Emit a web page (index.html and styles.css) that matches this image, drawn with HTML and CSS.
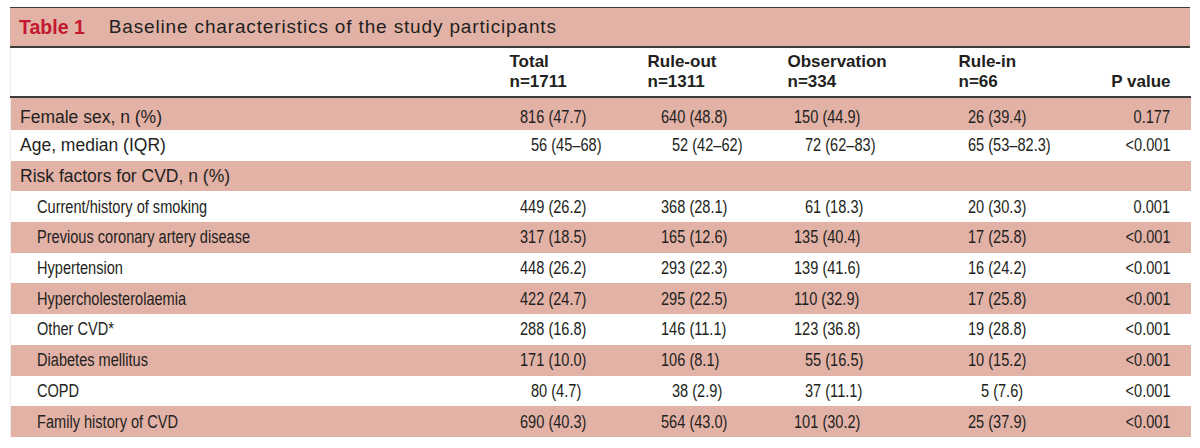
FILE: index.html
```html
<!DOCTYPE html>
<html lang="en">
<head>
<meta charset="utf-8">
<title>Table 1</title>
<link rel="stylesheet" href="styles.css">
</head>
<body>
<div class="tbl">
  <div class="caption"><span class="num">Table 1</span><span class="ttl">Baseline characteristics of the study participants</span></div>
  <table>
    <colgroup>
      <col class="c-label"><col class="c-total"><col class="c-out"><col class="c-obs"><col class="c-in"><col class="c-p">
    </colgroup>
    <thead>
      <tr>
        <th></th>
        <th>Total<br>n=1711</th>
        <th>Rule-out<br>n=1311</th>
        <th>Observation<br>n=334</th>
        <th>Rule-in<br>n=66</th>
        <th class="pv"><br>P value</th>
      </tr>
    </thead>
    <tbody>
      <tr class="pink first">
        <td class="lab">Female sex, n (%)</td>
        <td><span class="v">816 (47.7)</span></td><td><span class="v">640 (48.8)</span></td><td><span class="v">150 (44.9)</span></td><td><span class="v">26 (39.4)</span></td><td class="pv"><span class="v">0.177</span></td>
      </tr>
      <tr>
        <td class="lab">Age, median (IQR)</td>
        <td><span class="v sh">56 (45–68)</span></td><td><span class="v sh">52 (42–62)</span></td><td><span class="v sh">72 (62–83)</span></td><td><span class="v">65 (53–82.3)</span></td><td class="pv"><span class="v">&lt;0.001</span></td>
      </tr>
      <tr class="pink">
        <td class="lab">Risk factors for CVD, n (%)</td>
        <td></td><td></td><td></td><td></td><td></td>
      </tr>
      <tr>
        <td class="sub"><span class="v">Current/history of smoking</span></td>
        <td><span class="v">449 (26.2)</span></td><td><span class="v">368 (28.1)</span></td><td><span class="v sh">61 (18.3)</span></td><td><span class="v">20 (30.3)</span></td><td class="pv"><span class="v">0.001</span></td>
      </tr>
      <tr class="pink">
        <td class="sub"><span class="v">Previous coronary artery disease</span></td>
        <td><span class="v">317 (18.5)</span></td><td><span class="v">165 (12.6)</span></td><td><span class="v">135 (40.4)</span></td><td><span class="v">17 (25.8)</span></td><td class="pv"><span class="v">&lt;0.001</span></td>
      </tr>
      <tr>
        <td class="sub"><span class="v">Hypertension</span></td>
        <td><span class="v">448 (26.2)</span></td><td><span class="v">293 (22.3)</span></td><td><span class="v">139 (41.6)</span></td><td><span class="v">16 (24.2)</span></td><td class="pv"><span class="v">&lt;0.001</span></td>
      </tr>
      <tr class="pink">
        <td class="sub"><span class="v">Hypercholesterolaemia</span></td>
        <td><span class="v">422 (24.7)</span></td><td><span class="v">295 (22.5)</span></td><td><span class="v">110 (32.9)</span></td><td><span class="v">17 (25.8)</span></td><td class="pv"><span class="v">&lt;0.001</span></td>
      </tr>
      <tr>
        <td class="sub"><span class="v">Other CVD*</span></td>
        <td><span class="v">288 (16.8)</span></td><td><span class="v">146 (11.1)</span></td><td><span class="v">123 (36.8)</span></td><td><span class="v">19 (28.8)</span></td><td class="pv"><span class="v">&lt;0.001</span></td>
      </tr>
      <tr class="pink">
        <td class="sub"><span class="v">Diabetes mellitus</span></td>
        <td><span class="v">171 (10.0)</span></td><td><span class="v">106 (8.1)</span></td><td><span class="v sh">55 (16.5)</span></td><td><span class="v">10 (15.2)</span></td><td class="pv"><span class="v">&lt;0.001</span></td>
      </tr>
      <tr>
        <td class="sub"><span class="v">COPD</span></td>
        <td><span class="v sh">80 (4.7)</span></td><td><span class="v sh">38 (2.9)</span></td><td><span class="v sh">37 (11.1)</span></td><td><span class="v sh2">5 (7.6)</span></td><td class="pv"><span class="v">&lt;0.001</span></td>
      </tr>
      <tr class="pink">
        <td class="sub"><span class="v">Family history of CVD</span></td>
        <td><span class="v">690 (40.3)</span></td><td><span class="v">564 (43.0)</span></td><td><span class="v">101 (30.2)</span></td><td><span class="v">25 (37.9)</span></td><td class="pv"><span class="v">&lt;0.001</span></td>
      </tr>
    </tbody>
  </table>
</div>
</body>
</html>
```

FILE: styles.css
```css
html, body {
  margin: 0;
  padding: 0;
  background: #ffffff;
}

body {
  color: #231f20;
  font-family: "Liberation Sans", Arial, sans-serif;
}

.tbl {
  width: 1180px;
  margin: 7px 0 0 10px;
}

.caption {
  background: #e2b2a7;
  border-top: 1.5px solid #3c3c3c;
  border-bottom: 2px solid #3c3c3c;
  height: 41px;
  display: flex;
  align-items: center;
  padding-left: 9px;
  box-sizing: border-box;
}

.caption .num {
  color: #c3182f;
  font-weight: bold;
  font-size: 19.5px;
}

.caption .ttl {
  margin-left: 24px;
  font-size: 19px;
  letter-spacing: 0.85px;
  color: #231f20;
}

table {
  width: 1180px;
  border-collapse: collapse;
  table-layout: fixed;
}

.c-label { width: 489px; }
.c-total { width: 138px; }
.c-out { width: 140px; }
.c-obs { width: 171px; }
.c-in { width: 132px; }
.c-p { width: 110px; }

thead th {
  text-align: left;
  font-size: 17px;
  font-weight: bold;
  line-height: 20px;
  padding: 4px 0 4px 10px;
  vertical-align: top;
  border-bottom: 2px solid #3c3c3c;
  height: 40px;
}

thead th:first-child {
  border-left: 1px solid #ececec;
}

thead th.pv {
  text-align: right;
  padding-right: 20px;
}

tbody tr {
  height: 30.7px;
}

tbody tr.first {
  height: 33px;
}

tbody tr.first td {
  padding-top: 5px;
}

tbody tr.pink td {
  background: #e2b2a7;
}

tbody td {
  padding: 0;
  vertical-align: middle;
  white-space: nowrap;
  font-size: 18px;
  line-height: 22px;
}

tbody td:first-child {
  border-left: 1px solid #ececec;
}

tbody td:nth-child(2) { padding-left: 20px; }
tbody td:nth-child(3) { padding-left: 23px; }
tbody td:nth-child(4) { padding-left: 16px; }
tbody td:nth-child(5) { padding-left: 19px; }

tbody td.pv {
  text-align: right;
  padding-right: 20px;
}

tbody td.lab {
  font-size: 17.5px;
  padding-left: 9px;
}

tbody td.sub {
  padding-left: 26px;
}

/* condensed face emulation (the narrow grotesque of the original) */
.v {
  display: inline-block;
  transform: scaleX(0.81);
  transform-origin: left center;
}

td.pv .v {
  transform-origin: right center;
}

.sh {
  margin-left: 11px;
}

.sh2 {
  margin-left: 13px;
}
```
